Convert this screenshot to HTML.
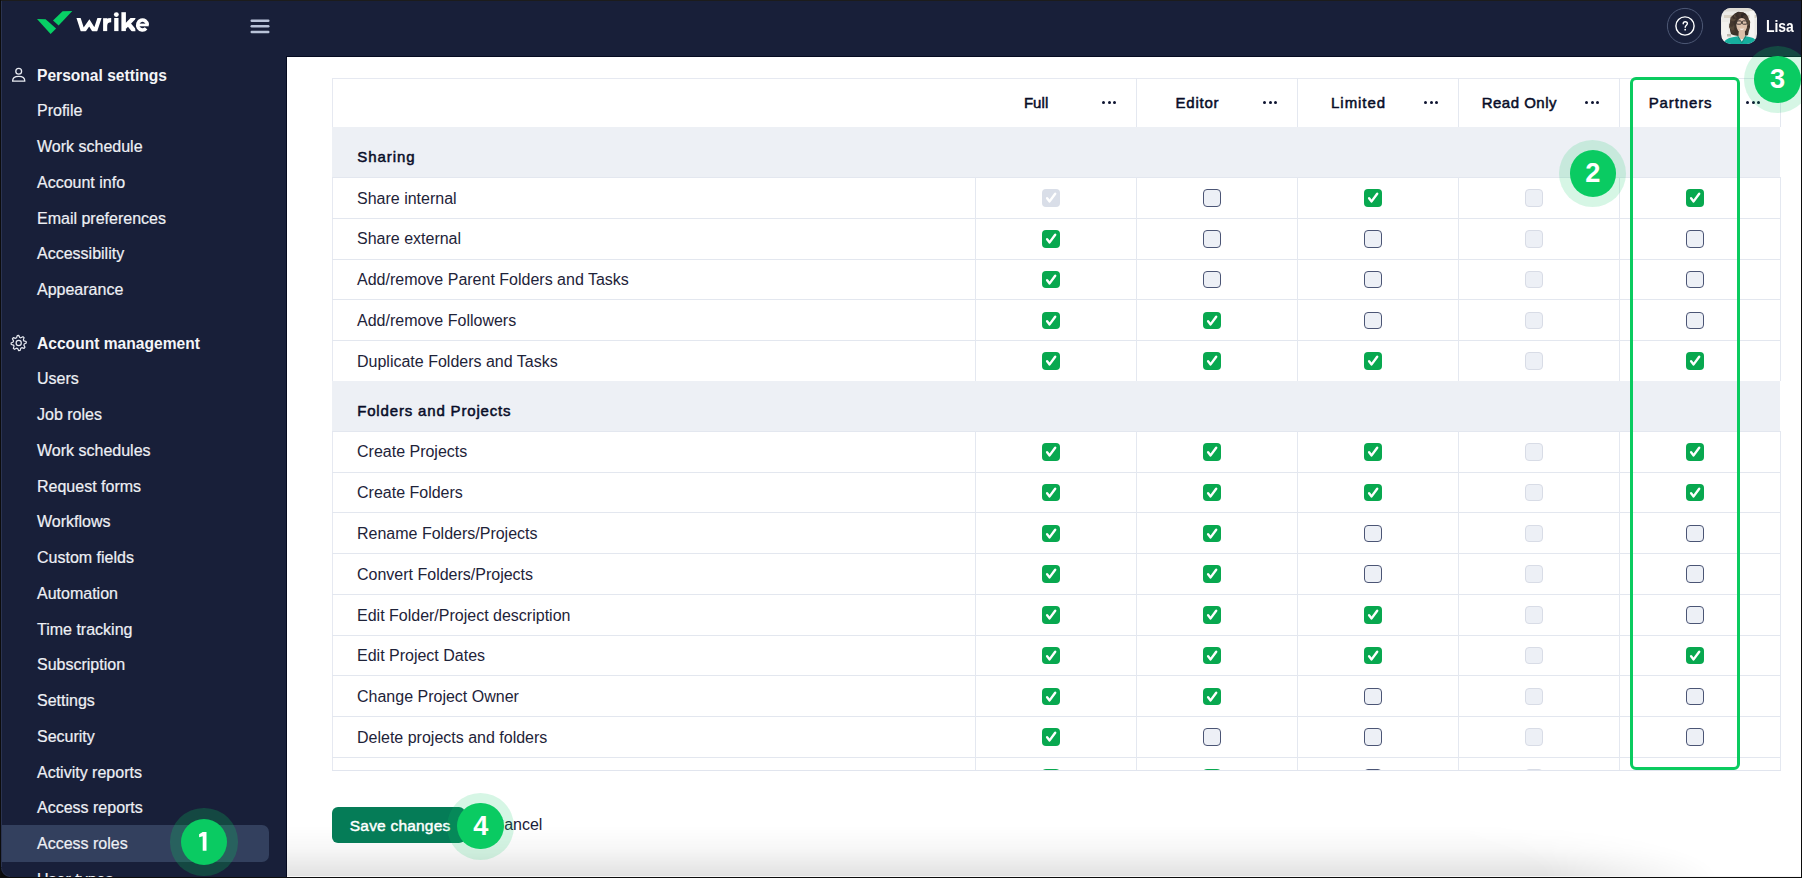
<!DOCTYPE html>
<html><head><meta charset="utf-8"><style>
*{margin:0;padding:0;box-sizing:border-box}
html,body{width:1802px;height:878px;overflow:hidden;background:#fff}
body{position:relative;font-family:"Liberation Sans",sans-serif}
.t{position:absolute;white-space:nowrap;line-height:1.117}
.abs{position:absolute}
.tclip{position:absolute;left:332px;top:78px;width:1449px;height:693px;overflow:hidden}
.inner{position:absolute;left:-332px;top:-78px;width:1802px;height:878px}
.vl{position:absolute;width:1px;background:#e4e8f0}
.hl{position:absolute;height:1px;background:#e3e7ef}
.sec{position:absolute;background:#edf0f5}
.hd{font-size:15px;font-weight:400;color:#080d28;text-align:center;-webkit-text-stroke:0.5px #080d28}
.dot{position:absolute;width:3.4px;height:3.4px;border-radius:50%;background:#0d1330}
.cb{position:absolute;width:17.6px;height:17.6px;border-radius:4px}
.cb svg{position:absolute;left:0;top:0}
.cb.on{background:#08a84f}
.cb.don{background:#d9dee8}
.cb.off{background:#edf0f6;border:1.3px solid #4b5575}
.cb.doff{background:#edf0f6;border:1.3px solid #d8dce6}
.badge{position:absolute;border-radius:50%;background:#0acb62;color:#fff;font-weight:700;text-align:center}
.halo{position:absolute;border-radius:50%;background:rgba(10,203,98,0.18)}
</style></head><body>
<div class="abs" style="left:0;top:0;width:1802px;height:57px;background:#181f39"></div>
<div class="abs" style="left:0;top:0;width:287px;height:878px;background:#181f39"></div>
<div class="abs" style="left:286px;top:57px;width:1px;height:821px;background:#050a20"></div>
<div class="abs" style="left:286px;top:56px;width:1516px;height:1px;background:#050a20"></div>
<div class="abs" style="left:0;top:825px;width:269px;height:37px;background:#33405e;border-radius:0 7px 7px 0"></div>
<div class="t" style="left:37px;top:66.88px;font-size:15.6px;font-weight:700;color:#f4f5f8;">Personal settings</div>
<div class="t" style="left:37px;top:102.42px;font-size:16px;font-weight:400;color:#eef0f5;-webkit-text-stroke:0.2px #eef0f5;">Profile</div>
<div class="t" style="left:37px;top:138.18px;font-size:16px;font-weight:400;color:#eef0f5;-webkit-text-stroke:0.2px #eef0f5;">Work schedule</div>
<div class="t" style="left:37px;top:173.94px;font-size:16px;font-weight:400;color:#eef0f5;-webkit-text-stroke:0.2px #eef0f5;">Account info</div>
<div class="t" style="left:37px;top:209.70px;font-size:16px;font-weight:400;color:#eef0f5;-webkit-text-stroke:0.2px #eef0f5;">Email preferences</div>
<div class="t" style="left:37px;top:245.46px;font-size:16px;font-weight:400;color:#eef0f5;-webkit-text-stroke:0.2px #eef0f5;">Accessibility</div>
<div class="t" style="left:37px;top:281.22px;font-size:16px;font-weight:400;color:#eef0f5;-webkit-text-stroke:0.2px #eef0f5;">Appearance</div>
<div class="t" style="left:37px;top:335.48px;font-size:15.6px;font-weight:700;color:#f4f5f8;">Account management</div>
<div class="t" style="left:37px;top:370.42px;font-size:16px;font-weight:400;color:#eef0f5;-webkit-text-stroke:0.2px #eef0f5;">Users</div>
<div class="t" style="left:37px;top:406.16px;font-size:16px;font-weight:400;color:#eef0f5;-webkit-text-stroke:0.2px #eef0f5;">Job roles</div>
<div class="t" style="left:37px;top:441.90px;font-size:16px;font-weight:400;color:#eef0f5;-webkit-text-stroke:0.2px #eef0f5;">Work schedules</div>
<div class="t" style="left:37px;top:477.64px;font-size:16px;font-weight:400;color:#eef0f5;-webkit-text-stroke:0.2px #eef0f5;">Request forms</div>
<div class="t" style="left:37px;top:513.38px;font-size:16px;font-weight:400;color:#eef0f5;-webkit-text-stroke:0.2px #eef0f5;">Workflows</div>
<div class="t" style="left:37px;top:549.12px;font-size:16px;font-weight:400;color:#eef0f5;-webkit-text-stroke:0.2px #eef0f5;">Custom fields</div>
<div class="t" style="left:37px;top:584.86px;font-size:16px;font-weight:400;color:#eef0f5;-webkit-text-stroke:0.2px #eef0f5;">Automation</div>
<div class="t" style="left:37px;top:620.60px;font-size:16px;font-weight:400;color:#eef0f5;-webkit-text-stroke:0.2px #eef0f5;">Time tracking</div>
<div class="t" style="left:37px;top:656.34px;font-size:16px;font-weight:400;color:#eef0f5;-webkit-text-stroke:0.2px #eef0f5;">Subscription</div>
<div class="t" style="left:37px;top:692.08px;font-size:16px;font-weight:400;color:#eef0f5;-webkit-text-stroke:0.2px #eef0f5;">Settings</div>
<div class="t" style="left:37px;top:727.82px;font-size:16px;font-weight:400;color:#eef0f5;-webkit-text-stroke:0.2px #eef0f5;">Security</div>
<div class="t" style="left:37px;top:763.56px;font-size:16px;font-weight:400;color:#eef0f5;-webkit-text-stroke:0.2px #eef0f5;">Activity reports</div>
<div class="t" style="left:37px;top:799.30px;font-size:16px;font-weight:400;color:#eef0f5;-webkit-text-stroke:0.2px #eef0f5;">Access reports</div>
<div class="t" style="left:37px;top:835.04px;font-size:16px;font-weight:400;color:#eef0f5;-webkit-text-stroke:0.2px #eef0f5;">Access roles</div>
<div class="t" style="left:37px;top:870.78px;font-size:16px;font-weight:400;color:#eef0f5;-webkit-text-stroke:0.2px #eef0f5;">User types</div>
<div class="tclip"><div class="inner">
<div class="abs" style="left:332px;top:78px;width:1448px;height:1px;background:#e6e9f1"></div>
<div class="abs" style="left:332px;top:78px;width:1px;height:692px;background:#e6e9f1"></div>
<div class="t hd" style="left:936.14px;width:200px;top:94.72px;letter-spacing:0.077px">Full</div>
<div class="dot" style="left:1102.00px;top:100.8px"></div>
<div class="dot" style="left:1107.50px;top:100.8px"></div>
<div class="dot" style="left:1113.00px;top:100.8px"></div>
<div class="t hd" style="left:1097.48px;width:200px;top:94.72px;letter-spacing:0.763px">Editor</div>
<div class="dot" style="left:1263.00px;top:100.8px"></div>
<div class="dot" style="left:1268.50px;top:100.8px"></div>
<div class="dot" style="left:1274.00px;top:100.8px"></div>
<div class="t hd" style="left:1258.57px;width:200px;top:94.72px;letter-spacing:0.941px">Limited</div>
<div class="dot" style="left:1424.00px;top:100.8px"></div>
<div class="dot" style="left:1429.50px;top:100.8px"></div>
<div class="dot" style="left:1435.00px;top:100.8px"></div>
<div class="t hd" style="left:1419.35px;width:200px;top:94.72px;letter-spacing:0.491px">Read Only</div>
<div class="dot" style="left:1585.00px;top:100.8px"></div>
<div class="dot" style="left:1590.50px;top:100.8px"></div>
<div class="dot" style="left:1596.00px;top:100.8px"></div>
<div class="t hd" style="left:1580.54px;width:200px;top:94.72px;letter-spacing:0.887px">Partners</div>
<div class="dot" style="left:1746.00px;top:100.8px"></div>
<div class="dot" style="left:1751.50px;top:100.8px"></div>
<div class="dot" style="left:1757.00px;top:100.8px"></div>
<div class="vl" style="left:1136px;top:78px;height:49px"></div>
<div class="vl" style="left:1297px;top:78px;height:49px"></div>
<div class="vl" style="left:1458px;top:78px;height:49px"></div>
<div class="vl" style="left:1619px;top:78px;height:49px"></div>
<div class="vl" style="left:1780px;top:78px;height:49px"></div>
<div class="sec" style="left:332px;top:127.00px;width:1448px;height:50px"></div>
<div class="t" style="left:357.2px;top:149.23px;font-size:15px;font-weight:400;color:#080d28;-webkit-text-stroke:0.5px #080d28;letter-spacing:0.95px;">Sharing</div>
<div class="hl" style="left:332px;top:177.00px;width:1448px"></div>
<div class="t" style="left:357px;top:189.62px;font-size:16px;font-weight:400;color:#1e2339;">Share internal</div>
<div class="vl" style="left:975px;top:177.00px;height:40.77px"></div>
<div class="vl" style="left:1136px;top:177.00px;height:40.77px"></div>
<div class="vl" style="left:1297px;top:177.00px;height:40.77px"></div>
<div class="vl" style="left:1458px;top:177.00px;height:40.77px"></div>
<div class="vl" style="left:1619px;top:177.00px;height:40.77px"></div>
<div class="vl" style="left:1780px;top:177.00px;height:40.77px"></div>
<div class="cb don" style="left:1042.40px;top:189.20px"><svg width="17" height="17" viewBox="0 0 17 17"><path d="M5.1 9.3 L7.6 12.4 L13.2 4.7" fill="none" stroke="#fff" stroke-width="2.4" stroke-linecap="round" stroke-linejoin="round"/></svg></div>
<div class="cb off" style="left:1203.40px;top:189.20px"></div>
<div class="cb on" style="left:1364.40px;top:189.20px"><svg width="17" height="17" viewBox="0 0 17 17"><path d="M5.1 9.3 L7.6 12.4 L13.2 4.7" fill="none" stroke="#fff" stroke-width="2.4" stroke-linecap="round" stroke-linejoin="round"/></svg></div>
<div class="cb doff" style="left:1525.40px;top:189.20px"></div>
<div class="cb on" style="left:1686.40px;top:189.20px"><svg width="17" height="17" viewBox="0 0 17 17"><path d="M5.1 9.3 L7.6 12.4 L13.2 4.7" fill="none" stroke="#fff" stroke-width="2.4" stroke-linecap="round" stroke-linejoin="round"/></svg></div>
<div class="hl" style="left:332px;top:217.77px;width:1448px"></div>
<div class="t" style="left:357px;top:230.39px;font-size:16px;font-weight:400;color:#1e2339;">Share external</div>
<div class="vl" style="left:975px;top:217.77px;height:40.77px"></div>
<div class="vl" style="left:1136px;top:217.77px;height:40.77px"></div>
<div class="vl" style="left:1297px;top:217.77px;height:40.77px"></div>
<div class="vl" style="left:1458px;top:217.77px;height:40.77px"></div>
<div class="vl" style="left:1619px;top:217.77px;height:40.77px"></div>
<div class="vl" style="left:1780px;top:217.77px;height:40.77px"></div>
<div class="cb on" style="left:1042.40px;top:229.97px"><svg width="17" height="17" viewBox="0 0 17 17"><path d="M5.1 9.3 L7.6 12.4 L13.2 4.7" fill="none" stroke="#fff" stroke-width="2.4" stroke-linecap="round" stroke-linejoin="round"/></svg></div>
<div class="cb off" style="left:1203.40px;top:229.97px"></div>
<div class="cb off" style="left:1364.40px;top:229.97px"></div>
<div class="cb doff" style="left:1525.40px;top:229.97px"></div>
<div class="cb off" style="left:1686.40px;top:229.97px"></div>
<div class="hl" style="left:332px;top:258.54px;width:1448px"></div>
<div class="t" style="left:357px;top:271.16px;font-size:16px;font-weight:400;color:#1e2339;">Add/remove Parent Folders and Tasks</div>
<div class="vl" style="left:975px;top:258.54px;height:40.77px"></div>
<div class="vl" style="left:1136px;top:258.54px;height:40.77px"></div>
<div class="vl" style="left:1297px;top:258.54px;height:40.77px"></div>
<div class="vl" style="left:1458px;top:258.54px;height:40.77px"></div>
<div class="vl" style="left:1619px;top:258.54px;height:40.77px"></div>
<div class="vl" style="left:1780px;top:258.54px;height:40.77px"></div>
<div class="cb on" style="left:1042.40px;top:270.74px"><svg width="17" height="17" viewBox="0 0 17 17"><path d="M5.1 9.3 L7.6 12.4 L13.2 4.7" fill="none" stroke="#fff" stroke-width="2.4" stroke-linecap="round" stroke-linejoin="round"/></svg></div>
<div class="cb off" style="left:1203.40px;top:270.74px"></div>
<div class="cb off" style="left:1364.40px;top:270.74px"></div>
<div class="cb doff" style="left:1525.40px;top:270.74px"></div>
<div class="cb off" style="left:1686.40px;top:270.74px"></div>
<div class="hl" style="left:332px;top:299.31px;width:1448px"></div>
<div class="t" style="left:357px;top:311.93px;font-size:16px;font-weight:400;color:#1e2339;">Add/remove Followers</div>
<div class="vl" style="left:975px;top:299.31px;height:40.77px"></div>
<div class="vl" style="left:1136px;top:299.31px;height:40.77px"></div>
<div class="vl" style="left:1297px;top:299.31px;height:40.77px"></div>
<div class="vl" style="left:1458px;top:299.31px;height:40.77px"></div>
<div class="vl" style="left:1619px;top:299.31px;height:40.77px"></div>
<div class="vl" style="left:1780px;top:299.31px;height:40.77px"></div>
<div class="cb on" style="left:1042.40px;top:311.51px"><svg width="17" height="17" viewBox="0 0 17 17"><path d="M5.1 9.3 L7.6 12.4 L13.2 4.7" fill="none" stroke="#fff" stroke-width="2.4" stroke-linecap="round" stroke-linejoin="round"/></svg></div>
<div class="cb on" style="left:1203.40px;top:311.51px"><svg width="17" height="17" viewBox="0 0 17 17"><path d="M5.1 9.3 L7.6 12.4 L13.2 4.7" fill="none" stroke="#fff" stroke-width="2.4" stroke-linecap="round" stroke-linejoin="round"/></svg></div>
<div class="cb off" style="left:1364.40px;top:311.51px"></div>
<div class="cb doff" style="left:1525.40px;top:311.51px"></div>
<div class="cb off" style="left:1686.40px;top:311.51px"></div>
<div class="hl" style="left:332px;top:340.08px;width:1448px"></div>
<div class="t" style="left:357px;top:352.70px;font-size:16px;font-weight:400;color:#1e2339;">Duplicate Folders and Tasks</div>
<div class="vl" style="left:975px;top:340.08px;height:40.77px"></div>
<div class="vl" style="left:1136px;top:340.08px;height:40.77px"></div>
<div class="vl" style="left:1297px;top:340.08px;height:40.77px"></div>
<div class="vl" style="left:1458px;top:340.08px;height:40.77px"></div>
<div class="vl" style="left:1619px;top:340.08px;height:40.77px"></div>
<div class="vl" style="left:1780px;top:340.08px;height:40.77px"></div>
<div class="cb on" style="left:1042.40px;top:352.28px"><svg width="17" height="17" viewBox="0 0 17 17"><path d="M5.1 9.3 L7.6 12.4 L13.2 4.7" fill="none" stroke="#fff" stroke-width="2.4" stroke-linecap="round" stroke-linejoin="round"/></svg></div>
<div class="cb on" style="left:1203.40px;top:352.28px"><svg width="17" height="17" viewBox="0 0 17 17"><path d="M5.1 9.3 L7.6 12.4 L13.2 4.7" fill="none" stroke="#fff" stroke-width="2.4" stroke-linecap="round" stroke-linejoin="round"/></svg></div>
<div class="cb on" style="left:1364.40px;top:352.28px"><svg width="17" height="17" viewBox="0 0 17 17"><path d="M5.1 9.3 L7.6 12.4 L13.2 4.7" fill="none" stroke="#fff" stroke-width="2.4" stroke-linecap="round" stroke-linejoin="round"/></svg></div>
<div class="cb doff" style="left:1525.40px;top:352.28px"></div>
<div class="cb on" style="left:1686.40px;top:352.28px"><svg width="17" height="17" viewBox="0 0 17 17"><path d="M5.1 9.3 L7.6 12.4 L13.2 4.7" fill="none" stroke="#fff" stroke-width="2.4" stroke-linecap="round" stroke-linejoin="round"/></svg></div>
<div class="hl" style="left:332px;top:380.85px;width:1448px"></div>
<div class="sec" style="left:332px;top:380.85px;width:1448px;height:50px"></div>
<div class="t" style="left:357.2px;top:403.07px;font-size:15px;font-weight:400;color:#080d28;-webkit-text-stroke:0.5px #080d28;letter-spacing:0.834px;">Folders and Projects</div>
<div class="hl" style="left:332px;top:430.85px;width:1448px"></div>
<div class="t" style="left:357px;top:443.47px;font-size:16px;font-weight:400;color:#1e2339;">Create Projects</div>
<div class="vl" style="left:975px;top:430.85px;height:40.77px"></div>
<div class="vl" style="left:1136px;top:430.85px;height:40.77px"></div>
<div class="vl" style="left:1297px;top:430.85px;height:40.77px"></div>
<div class="vl" style="left:1458px;top:430.85px;height:40.77px"></div>
<div class="vl" style="left:1619px;top:430.85px;height:40.77px"></div>
<div class="vl" style="left:1780px;top:430.85px;height:40.77px"></div>
<div class="cb on" style="left:1042.40px;top:443.05px"><svg width="17" height="17" viewBox="0 0 17 17"><path d="M5.1 9.3 L7.6 12.4 L13.2 4.7" fill="none" stroke="#fff" stroke-width="2.4" stroke-linecap="round" stroke-linejoin="round"/></svg></div>
<div class="cb on" style="left:1203.40px;top:443.05px"><svg width="17" height="17" viewBox="0 0 17 17"><path d="M5.1 9.3 L7.6 12.4 L13.2 4.7" fill="none" stroke="#fff" stroke-width="2.4" stroke-linecap="round" stroke-linejoin="round"/></svg></div>
<div class="cb on" style="left:1364.40px;top:443.05px"><svg width="17" height="17" viewBox="0 0 17 17"><path d="M5.1 9.3 L7.6 12.4 L13.2 4.7" fill="none" stroke="#fff" stroke-width="2.4" stroke-linecap="round" stroke-linejoin="round"/></svg></div>
<div class="cb doff" style="left:1525.40px;top:443.05px"></div>
<div class="cb on" style="left:1686.40px;top:443.05px"><svg width="17" height="17" viewBox="0 0 17 17"><path d="M5.1 9.3 L7.6 12.4 L13.2 4.7" fill="none" stroke="#fff" stroke-width="2.4" stroke-linecap="round" stroke-linejoin="round"/></svg></div>
<div class="hl" style="left:332px;top:471.62px;width:1448px"></div>
<div class="t" style="left:357px;top:484.24px;font-size:16px;font-weight:400;color:#1e2339;">Create Folders</div>
<div class="vl" style="left:975px;top:471.62px;height:40.77px"></div>
<div class="vl" style="left:1136px;top:471.62px;height:40.77px"></div>
<div class="vl" style="left:1297px;top:471.62px;height:40.77px"></div>
<div class="vl" style="left:1458px;top:471.62px;height:40.77px"></div>
<div class="vl" style="left:1619px;top:471.62px;height:40.77px"></div>
<div class="vl" style="left:1780px;top:471.62px;height:40.77px"></div>
<div class="cb on" style="left:1042.40px;top:483.82px"><svg width="17" height="17" viewBox="0 0 17 17"><path d="M5.1 9.3 L7.6 12.4 L13.2 4.7" fill="none" stroke="#fff" stroke-width="2.4" stroke-linecap="round" stroke-linejoin="round"/></svg></div>
<div class="cb on" style="left:1203.40px;top:483.82px"><svg width="17" height="17" viewBox="0 0 17 17"><path d="M5.1 9.3 L7.6 12.4 L13.2 4.7" fill="none" stroke="#fff" stroke-width="2.4" stroke-linecap="round" stroke-linejoin="round"/></svg></div>
<div class="cb on" style="left:1364.40px;top:483.82px"><svg width="17" height="17" viewBox="0 0 17 17"><path d="M5.1 9.3 L7.6 12.4 L13.2 4.7" fill="none" stroke="#fff" stroke-width="2.4" stroke-linecap="round" stroke-linejoin="round"/></svg></div>
<div class="cb doff" style="left:1525.40px;top:483.82px"></div>
<div class="cb on" style="left:1686.40px;top:483.82px"><svg width="17" height="17" viewBox="0 0 17 17"><path d="M5.1 9.3 L7.6 12.4 L13.2 4.7" fill="none" stroke="#fff" stroke-width="2.4" stroke-linecap="round" stroke-linejoin="round"/></svg></div>
<div class="hl" style="left:332px;top:512.39px;width:1448px"></div>
<div class="t" style="left:357px;top:525.01px;font-size:16px;font-weight:400;color:#1e2339;">Rename Folders/Projects</div>
<div class="vl" style="left:975px;top:512.39px;height:40.77px"></div>
<div class="vl" style="left:1136px;top:512.39px;height:40.77px"></div>
<div class="vl" style="left:1297px;top:512.39px;height:40.77px"></div>
<div class="vl" style="left:1458px;top:512.39px;height:40.77px"></div>
<div class="vl" style="left:1619px;top:512.39px;height:40.77px"></div>
<div class="vl" style="left:1780px;top:512.39px;height:40.77px"></div>
<div class="cb on" style="left:1042.40px;top:524.59px"><svg width="17" height="17" viewBox="0 0 17 17"><path d="M5.1 9.3 L7.6 12.4 L13.2 4.7" fill="none" stroke="#fff" stroke-width="2.4" stroke-linecap="round" stroke-linejoin="round"/></svg></div>
<div class="cb on" style="left:1203.40px;top:524.59px"><svg width="17" height="17" viewBox="0 0 17 17"><path d="M5.1 9.3 L7.6 12.4 L13.2 4.7" fill="none" stroke="#fff" stroke-width="2.4" stroke-linecap="round" stroke-linejoin="round"/></svg></div>
<div class="cb off" style="left:1364.40px;top:524.59px"></div>
<div class="cb doff" style="left:1525.40px;top:524.59px"></div>
<div class="cb off" style="left:1686.40px;top:524.59px"></div>
<div class="hl" style="left:332px;top:553.16px;width:1448px"></div>
<div class="t" style="left:357px;top:565.78px;font-size:16px;font-weight:400;color:#1e2339;">Convert Folders/Projects</div>
<div class="vl" style="left:975px;top:553.16px;height:40.77px"></div>
<div class="vl" style="left:1136px;top:553.16px;height:40.77px"></div>
<div class="vl" style="left:1297px;top:553.16px;height:40.77px"></div>
<div class="vl" style="left:1458px;top:553.16px;height:40.77px"></div>
<div class="vl" style="left:1619px;top:553.16px;height:40.77px"></div>
<div class="vl" style="left:1780px;top:553.16px;height:40.77px"></div>
<div class="cb on" style="left:1042.40px;top:565.36px"><svg width="17" height="17" viewBox="0 0 17 17"><path d="M5.1 9.3 L7.6 12.4 L13.2 4.7" fill="none" stroke="#fff" stroke-width="2.4" stroke-linecap="round" stroke-linejoin="round"/></svg></div>
<div class="cb on" style="left:1203.40px;top:565.36px"><svg width="17" height="17" viewBox="0 0 17 17"><path d="M5.1 9.3 L7.6 12.4 L13.2 4.7" fill="none" stroke="#fff" stroke-width="2.4" stroke-linecap="round" stroke-linejoin="round"/></svg></div>
<div class="cb off" style="left:1364.40px;top:565.36px"></div>
<div class="cb doff" style="left:1525.40px;top:565.36px"></div>
<div class="cb off" style="left:1686.40px;top:565.36px"></div>
<div class="hl" style="left:332px;top:593.93px;width:1448px"></div>
<div class="t" style="left:357px;top:606.55px;font-size:16px;font-weight:400;color:#1e2339;">Edit Folder/Project description</div>
<div class="vl" style="left:975px;top:593.93px;height:40.77px"></div>
<div class="vl" style="left:1136px;top:593.93px;height:40.77px"></div>
<div class="vl" style="left:1297px;top:593.93px;height:40.77px"></div>
<div class="vl" style="left:1458px;top:593.93px;height:40.77px"></div>
<div class="vl" style="left:1619px;top:593.93px;height:40.77px"></div>
<div class="vl" style="left:1780px;top:593.93px;height:40.77px"></div>
<div class="cb on" style="left:1042.40px;top:606.13px"><svg width="17" height="17" viewBox="0 0 17 17"><path d="M5.1 9.3 L7.6 12.4 L13.2 4.7" fill="none" stroke="#fff" stroke-width="2.4" stroke-linecap="round" stroke-linejoin="round"/></svg></div>
<div class="cb on" style="left:1203.40px;top:606.13px"><svg width="17" height="17" viewBox="0 0 17 17"><path d="M5.1 9.3 L7.6 12.4 L13.2 4.7" fill="none" stroke="#fff" stroke-width="2.4" stroke-linecap="round" stroke-linejoin="round"/></svg></div>
<div class="cb on" style="left:1364.40px;top:606.13px"><svg width="17" height="17" viewBox="0 0 17 17"><path d="M5.1 9.3 L7.6 12.4 L13.2 4.7" fill="none" stroke="#fff" stroke-width="2.4" stroke-linecap="round" stroke-linejoin="round"/></svg></div>
<div class="cb doff" style="left:1525.40px;top:606.13px"></div>
<div class="cb off" style="left:1686.40px;top:606.13px"></div>
<div class="hl" style="left:332px;top:634.70px;width:1448px"></div>
<div class="t" style="left:357px;top:647.32px;font-size:16px;font-weight:400;color:#1e2339;">Edit Project Dates</div>
<div class="vl" style="left:975px;top:634.70px;height:40.77px"></div>
<div class="vl" style="left:1136px;top:634.70px;height:40.77px"></div>
<div class="vl" style="left:1297px;top:634.70px;height:40.77px"></div>
<div class="vl" style="left:1458px;top:634.70px;height:40.77px"></div>
<div class="vl" style="left:1619px;top:634.70px;height:40.77px"></div>
<div class="vl" style="left:1780px;top:634.70px;height:40.77px"></div>
<div class="cb on" style="left:1042.40px;top:646.90px"><svg width="17" height="17" viewBox="0 0 17 17"><path d="M5.1 9.3 L7.6 12.4 L13.2 4.7" fill="none" stroke="#fff" stroke-width="2.4" stroke-linecap="round" stroke-linejoin="round"/></svg></div>
<div class="cb on" style="left:1203.40px;top:646.90px"><svg width="17" height="17" viewBox="0 0 17 17"><path d="M5.1 9.3 L7.6 12.4 L13.2 4.7" fill="none" stroke="#fff" stroke-width="2.4" stroke-linecap="round" stroke-linejoin="round"/></svg></div>
<div class="cb on" style="left:1364.40px;top:646.90px"><svg width="17" height="17" viewBox="0 0 17 17"><path d="M5.1 9.3 L7.6 12.4 L13.2 4.7" fill="none" stroke="#fff" stroke-width="2.4" stroke-linecap="round" stroke-linejoin="round"/></svg></div>
<div class="cb doff" style="left:1525.40px;top:646.90px"></div>
<div class="cb on" style="left:1686.40px;top:646.90px"><svg width="17" height="17" viewBox="0 0 17 17"><path d="M5.1 9.3 L7.6 12.4 L13.2 4.7" fill="none" stroke="#fff" stroke-width="2.4" stroke-linecap="round" stroke-linejoin="round"/></svg></div>
<div class="hl" style="left:332px;top:675.47px;width:1448px"></div>
<div class="t" style="left:357px;top:688.09px;font-size:16px;font-weight:400;color:#1e2339;">Change Project Owner</div>
<div class="vl" style="left:975px;top:675.47px;height:40.77px"></div>
<div class="vl" style="left:1136px;top:675.47px;height:40.77px"></div>
<div class="vl" style="left:1297px;top:675.47px;height:40.77px"></div>
<div class="vl" style="left:1458px;top:675.47px;height:40.77px"></div>
<div class="vl" style="left:1619px;top:675.47px;height:40.77px"></div>
<div class="vl" style="left:1780px;top:675.47px;height:40.77px"></div>
<div class="cb on" style="left:1042.40px;top:687.67px"><svg width="17" height="17" viewBox="0 0 17 17"><path d="M5.1 9.3 L7.6 12.4 L13.2 4.7" fill="none" stroke="#fff" stroke-width="2.4" stroke-linecap="round" stroke-linejoin="round"/></svg></div>
<div class="cb on" style="left:1203.40px;top:687.67px"><svg width="17" height="17" viewBox="0 0 17 17"><path d="M5.1 9.3 L7.6 12.4 L13.2 4.7" fill="none" stroke="#fff" stroke-width="2.4" stroke-linecap="round" stroke-linejoin="round"/></svg></div>
<div class="cb off" style="left:1364.40px;top:687.67px"></div>
<div class="cb doff" style="left:1525.40px;top:687.67px"></div>
<div class="cb off" style="left:1686.40px;top:687.67px"></div>
<div class="hl" style="left:332px;top:716.24px;width:1448px"></div>
<div class="t" style="left:357px;top:728.86px;font-size:16px;font-weight:400;color:#1e2339;">Delete projects and folders</div>
<div class="vl" style="left:975px;top:716.24px;height:40.77px"></div>
<div class="vl" style="left:1136px;top:716.24px;height:40.77px"></div>
<div class="vl" style="left:1297px;top:716.24px;height:40.77px"></div>
<div class="vl" style="left:1458px;top:716.24px;height:40.77px"></div>
<div class="vl" style="left:1619px;top:716.24px;height:40.77px"></div>
<div class="vl" style="left:1780px;top:716.24px;height:40.77px"></div>
<div class="cb on" style="left:1042.40px;top:728.44px"><svg width="17" height="17" viewBox="0 0 17 17"><path d="M5.1 9.3 L7.6 12.4 L13.2 4.7" fill="none" stroke="#fff" stroke-width="2.4" stroke-linecap="round" stroke-linejoin="round"/></svg></div>
<div class="cb off" style="left:1203.40px;top:728.44px"></div>
<div class="cb off" style="left:1364.40px;top:728.44px"></div>
<div class="cb doff" style="left:1525.40px;top:728.44px"></div>
<div class="cb off" style="left:1686.40px;top:728.44px"></div>
<div class="hl" style="left:332px;top:757.01px;width:1448px"></div>
<div class="vl" style="left:975px;top:757.01px;height:40.77px"></div>
<div class="vl" style="left:1136px;top:757.01px;height:40.77px"></div>
<div class="vl" style="left:1297px;top:757.01px;height:40.77px"></div>
<div class="vl" style="left:1458px;top:757.01px;height:40.77px"></div>
<div class="vl" style="left:1619px;top:757.01px;height:40.77px"></div>
<div class="vl" style="left:1780px;top:757.01px;height:40.77px"></div>
<div class="cb on" style="left:1042.40px;top:769.21px"><svg width="17" height="17" viewBox="0 0 17 17"><path d="M5.1 9.3 L7.6 12.4 L13.2 4.7" fill="none" stroke="#fff" stroke-width="2.4" stroke-linecap="round" stroke-linejoin="round"/></svg></div>
<div class="cb on" style="left:1203.40px;top:769.21px"><svg width="17" height="17" viewBox="0 0 17 17"><path d="M5.1 9.3 L7.6 12.4 L13.2 4.7" fill="none" stroke="#fff" stroke-width="2.4" stroke-linecap="round" stroke-linejoin="round"/></svg></div>
<div class="cb off" style="left:1364.40px;top:769.21px"></div>
<div class="cb doff" style="left:1525.40px;top:769.21px"></div>
<div class="cb off" style="left:1686.40px;top:769.21px"></div>
<div class="hl" style="left:332px;top:797.78px;width:1448px"></div>
<div class="abs" style="left:332px;top:770px;width:1449px;height:1px;background:#e1e5ee"></div>
</div></div>
<svg class="abs" style="left:0;top:0" width="300" height="57" viewBox="0 0 300 57"><polygon points="37,19.1 45.6,19.3 56.1,28.5 50.6,33.9" fill="#08cf65"/><polygon points="53,20.4 62.6,11.2 72.3,11 58.6,25.6" fill="#08cf65"/><defs><clipPath id="wk"><rect x="70" y="18" width="90" height="13.2"/></clipPath><clipPath id="wk2"><rect x="70" y="18" width="65.4" height="13.2"/></clipPath></defs><g clip-path="url(#wk)"><path d="M77.6 15 L83 31.9 L89.3 22.9 L94.9 31.9 L100.5 15" fill="none" stroke="#fff" stroke-width="4.0" stroke-linejoin="miter" stroke-miterlimit="10"/></g><rect x="103.1" y="18.2" width="4.1" height="12.9" fill="#fff"/><path d="M103.6 22.6 C104.4 19.6 106.8 18 111.2 18 L111.2 22.3 C108.6 22.3 107.2 23.4 107.1 25.5 Z" fill="#fff"/><rect x="114.2" y="18" width="4.3" height="13.1" fill="#fff"/><circle cx="116.35" cy="14.6" r="2.45" fill="#fff"/><rect x="121.4" y="12.2" width="4.5" height="18.9" fill="#fff"/><g clip-path="url(#wk2)"><path d="M124.5 27.2 L135.2 16.3" stroke="#fff" stroke-width="4.3"/><path d="M127.6 22.8 L135.6 32.6" stroke="#fff" stroke-width="4.5"/></g><path d="M147.35 24.9 A4.85 5 0 1 0 146.1 28.4" fill="none" stroke="#fff" stroke-width="3.5"/><rect x="137.8" y="23.6" width="10.9" height="2.7" fill="#fff"/><rect x="250.5" y="19.4" width="19" height="2.5" rx="1.2" fill="#b9c3d9"/><rect x="250.5" y="25" width="19" height="2.5" rx="1.2" fill="#b9c3d9"/><rect x="250.5" y="30.7" width="19" height="2.5" rx="1.2" fill="#b9c3d9"/></svg>
<svg class="abs" style="left:0;top:60px" width="30" height="30" viewBox="0 0 30 30"><circle cx="18.7" cy="11.3" r="2.9" fill="none" stroke="#e8ebf2" stroke-width="1.3"/><path d="M12.6 21.2 C12.6 17.6 15.4 16.4 18.7 16.4 C22 16.4 24.8 17.6 24.8 21.2 Z" fill="none" stroke="#e8ebf2" stroke-width="1.3" stroke-linejoin="round"/></svg>
<svg class="abs" style="left:0;top:0" width="40" height="400" viewBox="0 0 40 400"><polygon points="18.70,335.40 19.79,337.51 20.84,337.83 22.92,336.68 24.07,337.63 23.36,339.89 23.87,340.86 26.15,341.52 26.30,343.00 24.19,344.09 23.87,345.14 25.02,347.22 24.07,348.37 21.81,347.66 20.84,348.17 20.18,350.45 18.70,350.60 17.61,348.49 16.56,348.17 14.48,349.32 13.33,348.37 14.04,346.11 13.53,345.14 11.25,344.48 11.10,343.00 13.21,341.91 13.53,340.86 12.38,338.78 13.33,337.63 15.59,338.34 16.56,337.83 17.22,335.55" fill="none" stroke="#e8ebf2" stroke-width="1.2" stroke-linejoin="round"/><circle cx="18.7" cy="343.0" r="2.6" fill="none" stroke="#e8ebf2" stroke-width="1.2"/></svg>
<svg class="abs" style="left:1660px;top:0" width="50" height="57" viewBox="0 0 50 57"><circle cx="25" cy="26" r="17.6" fill="none" stroke="#4d5875" stroke-width="1"/><circle cx="25" cy="26" r="9.1" fill="none" stroke="#fff" stroke-width="1.4"/><path d="M23.2 23.7 C23.2 22.4 24 21.7 25.2 21.7 C26.5 21.7 27.4 22.5 27.4 23.6 C27.4 25.1 25.2 25.3 25.2 27.3" fill="none" stroke="#fff" stroke-width="1.4" stroke-linecap="round"/><circle cx="25.2" cy="29.7" r="0.9" fill="#fff"/></svg>
<svg class="abs" style="left:1721px;top:8px" width="36" height="36" viewBox="0 0 36 36"><defs><clipPath id="av"><rect x="0" y="0" width="36" height="36" rx="10"/></clipPath><filter id="bl" x="-20%" y="-20%" width="140%" height="140%"><feGaussianBlur stdDeviation="0.4"/></filter></defs><g clip-path="url(#av)"><rect width="36" height="36" fill="#ecebe7"/><g filter="url(#bl)"><rect x="0" y="0" width="36" height="3.5" fill="#dedbd4"/><rect x="3" y="7" width="32" height="3" fill="#d9d2c4"/><rect x="28.5" y="3" width="5" height="33" fill="#f6f5f2"/><rect x="1" y="14" width="6" height="22" fill="#f3f2ef"/><rect x="6" y="26" width="4" height="2.5" fill="#bdb8ae"/><path d="M10 26 C8 20 9 14 10.5 10 C12 5.5 16 4 19.5 4 C24 4 27 7 27.5 11 C28.3 16 28.5 22 27 27 C24 28.5 14 28.5 10 26 Z" fill="#3d312b"/><circle cx="26.6" cy="16.5" r="2.4" fill="#2f2522"/><circle cx="26.4" cy="18.6" r="2.6" fill="#3a2e29"/><circle cx="25.9" cy="20.6" r="2.6" fill="#45372f"/><circle cx="12.1" cy="22.4" r="2.4" fill="#45372f"/><circle cx="11.3" cy="20.6" r="1.9" fill="#574639"/><circle cx="10.8" cy="18.6" r="2.7" fill="#574639"/><circle cx="10.6" cy="16.5" r="2.3" fill="#45372f"/><circle cx="10.8" cy="14.4" r="1.8" fill="#45372f"/><circle cx="11.3" cy="12.4" r="2.2" fill="#45372f"/><circle cx="12.1" cy="10.6" r="2.7" fill="#574639"/><circle cx="13.2" cy="9.1" r="2.0" fill="#3a2e29"/><circle cx="14.6" cy="7.8" r="1.9" fill="#574639"/><circle cx="16.1" cy="7.0" r="1.9" fill="#3a2e29"/><circle cx="17.8" cy="6.6" r="2.8" fill="#3a2e29"/><circle cx="19.4" cy="6.6" r="2.0" fill="#45372f"/><circle cx="21.1" cy="7.0" r="2.8" fill="#45372f"/><circle cx="22.6" cy="7.8" r="2.7" fill="#2f2522"/><circle cx="24.0" cy="9.1" r="2.1" fill="#45372f"/><circle cx="25.1" cy="10.6" r="2.3" fill="#45372f"/><circle cx="25.9" cy="12.4" r="2.0" fill="#45372f"/><circle cx="26.4" cy="14.4" r="2.8" fill="#574639"/><ellipse cx="20.8" cy="17.3" rx="5.4" ry="7.3" fill="#dcc0ab"/><path d="M17.8 23 L23.8 23 L24.4 31 L17.2 31 Z" fill="#dcbfa9"/><rect x="15.6" y="12.9" width="4.8" height="3.3" rx="1" fill="none" stroke="#3f3633" stroke-width="1"/><rect x="21.3" y="12.9" width="4.8" height="3.3" rx="1" fill="none" stroke="#3f3633" stroke-width="1"/><path d="M18.2 20.4 Q20.8 23 23.4 20.4 Q20.8 21.3 18.2 20.4 Z" fill="#fff"/><path d="M2 37 C3 31.5 8 29.5 15.8 28.6 L20.8 34.5 L25.8 28.6 C33 29.5 35.5 31.5 37 37 Z" fill="#13ae9e"/><path d="M15.8 28.6 L17.4 28.1 L20.8 33.8 L24.2 28.1 L25.8 28.6 L20.8 35.2 Z" fill="#0c8a7d"/></g></g></svg>
<div class="t" style="left:1766px;top:17.52px;font-size:16px;font-weight:700;color:#fff;"><span style="display:inline-block;transform:scaleX(0.87);transform-origin:0 0">Lisa</span></div>
<div class="abs" style="left:1630px;top:77px;width:110px;height:693px;border:3.5px solid #0acb5f;border-radius:6px"></div>
<div class="abs" style="left:287px;top:826px;width:1514px;height:50px;background:linear-gradient(to bottom,rgba(0,0,0,0) 0%,rgba(0,0,0,0.03) 45%,rgba(0,0,0,0.115) 100%);-webkit-mask-image:radial-gradient(ellipse 1430px 120px at 0% 100%,#000 88%,transparent 100%);mask-image:radial-gradient(ellipse 1430px 120px at 0% 100%,#000 88%,transparent 100%)"></div>
<div class="abs" style="left:287px;top:876px;width:1514px;height:1px;background:#f6f6f6"></div>
<div class="abs" style="left:332px;top:806.6px;width:133px;height:36px;background:#057c57;border-radius:6px"></div>
<div class="t" style="left:349.8px;top:816.77px;font-size:15.5px;font-weight:400;color:#fff;-webkit-text-stroke:0.45px #fff;letter-spacing:0.2px;">Save changes</div>
<div class="t" style="left:492.6px;top:816.12px;font-size:16px;font-weight:400;color:#1b2038;">Cancel</div>
<div class="halo" style="left:170.20px;top:808.20px;width:67.4px;height:67.4px;background:rgba(10,203,98,0.24)"></div><div class="badge" style="left:180.70px;top:818.70px;width:46.4px;height:46.4px"></div><svg class="abs" style="left:190px;top:825px" width="30" height="30" viewBox="190 825 30 30"><path d="M202.7 832.1 L206.5 832.1 L206.5 850.8 L202.7 850.8 L202.7 836.2 L199.1 837.3 L199.1 834.3 Z" fill="#fff"/></svg>
<div class="halo" style="left:1559.00px;top:139.80px;width:67.4px;height:67.4px;background:rgba(10,203,98,0.17)"></div><div class="badge" style="left:1569.50px;top:150.30px;width:46.4px;height:46.4px"></div><div class="t" style="left:1585.3px;top:158.28px;font-size:27.2px;font-weight:700;color:#fff;">2</div>
<div class="halo" style="left:1743.80px;top:45.80px;width:67.4px;height:67.4px;background:rgba(10,203,98,0.24);clip-path:inset(0 0 56.20px 0)"></div><div class="halo" style="left:1743.80px;top:45.80px;width:67.4px;height:67.4px;background:rgba(10,203,98,0.17);clip-path:inset(11.20px 0 0 0)"></div><div class="badge" style="left:1754.30px;top:56.30px;width:46.4px;height:46.4px"></div><div class="t" style="left:1770.1px;top:64.28px;font-size:27.2px;font-weight:700;color:#fff;">3</div>
<div class="halo" style="left:446.90px;top:792.60px;width:67.4px;height:67.4px;background:rgba(10,203,98,0.17)"></div><div class="badge" style="left:457.40px;top:803.10px;width:46.4px;height:46.4px"></div><div class="t" style="left:473.20000000000005px;top:811.08px;font-size:27.2px;font-weight:700;color:#fff;">4</div>
<!-- frame -->
<svg class="abs" style="left:0;top:866px" width="12" height="12" viewBox="0 0 12 12"><path d="M0 0 L1 0 L1 2 A9 9 0 0 0 10 11 L12 11 L12 12 L0 12 Z" fill="#0a0a0a"/><path d="M1.5 2 A9 9 0 0 0 10 10.5" fill="none" stroke="#3a4460" stroke-width="0.7" opacity="0.6"/></svg>
<div class="abs" style="left:0;top:0;width:1802px;height:1px;background:#1c1c1c"></div>
<div class="abs" style="left:0;top:0;width:1px;height:878px;background:#0c0c0c"></div>
<div class="abs" style="left:1px;top:1px;width:1px;height:866px;background:#2a3350"></div>
<div class="abs" style="left:1801px;top:0;width:1px;height:878px;background:#0c0c0c"></div>
<div class="abs" style="left:0;top:877px;width:1802px;height:1px;background:#0c0c0c"></div>
</body></html>
